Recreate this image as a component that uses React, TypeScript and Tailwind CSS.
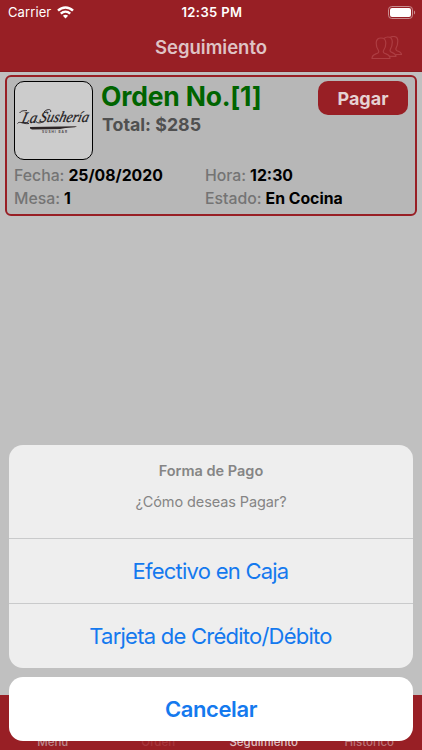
import clsx from "clsx"

const details = [
  { label: "Fecha:", value: "25/08/2020" },
  { label: "Hora:", value: "12:30" },
  { label: "Mesa:", value: "1" },
  { label: "Estado:", value: "En Cocina" },
]

const tabs = [
  { label: "Menú", color: "text-[#bc8a8d]" },
  { label: "Orden", color: "text-[#a8383e]" },
  { label: "Seguimiento", color: "text-[#dfc3c5]" },
  { label: "Histórico", color: "text-[#bc7478]" },
]

const options = ["Efectivo en Caja", "Tarjeta de Crédito/Débito"]

function WifiIcon() {
  return (
    <svg width="17" height="13" viewBox="0 0 17 13" fill="none" stroke="white" strokeWidth="2.4">
      <path d="M1 4.6C5.2 .4 11.8 .4 16 4.6" />
      <path d="M3.8 7.6C6.5 5.1 10.5 5.1 13.2 7.6" />
      <path d="M8.5 12.4L5.9 9.8C7.4 8.4 9.6 8.4 11.1 9.8Z" fill="white" stroke="none" />
    </svg>
  )
}

function BatteryIcon() {
  return (
    <svg width="28" height="13" viewBox="0 0 28 13" fill="none">
      <rect x=".5" y=".5" width="24" height="12" rx="3.3" stroke="#c98d90" />
      <rect x="2" y="2" width="21" height="9" rx="2" fill="white" />
      <path d="M26 4.5C27.5 5.2 27.5 7.8 26 8.5Z" fill="#c98d90" />
    </svg>
  )
}

function PeopleIcon() {
  return (
    <svg width="32" height="24" viewBox="0 0 32 24" fill="none" stroke="#ad3d42" strokeWidth="1.2" strokeLinejoin="round">
      <path d="M1 22.5C1 18.5 3.5 18.5 6.5 17.2C8 16.5 8 15.2 7.2 14C5.8 12 5.2 10 5.2 7C5.2 3.7 7 2 10 2S14.8 3.7 14.8 7C14.8 10 14.2 12 12.8 14C12 15.2 12 16.5 13.5 17.2C16.5 18.5 19 18.5 19 22.5Z" />
      <path d="M13 2.5C14 1.5 15.2 1 16.8 1C19.8 1 21.3 2.8 21.3 6C21.3 9 20.7 11 19.5 13C18.8 14.3 18.9 15.5 20.3 16.1C23 17.3 25 17.7 25 20.3H19" />
      <path d="M19.3 1.5C20.2 .8 21.2 .5 22.5 .5C25.5 .5 26.8 2.3 26.8 5C26.8 8 26.2 10 25.2 11.7C24.6 13 24.7 14 26 14.7C28.5 15.8 30.5 16 30.5 18.5H25" />
    </svg>
  )
}

function Logo() {
  return (
    <div className="h-[79px] w-[79px] rounded-[10px] border border-black bg-[#cccccc]">
      <svg className="overflow-visible" width="77" height="77" viewBox="0 0 77 77">
        <g fontFamily="'Liberation Serif', cursive" fontStyle="italic" fill="#211b1d" stroke="#211b1d" strokeWidth=".25">
          <text transform="translate(6 41) skewX(-14)" fontSize="16" textLength="15" lengthAdjust="spacingAndGlyphs">
            La
          </text>
          <text transform="translate(24 40) skewX(-14)" fontSize="15.5" textLength="49" lengthAdjust="spacingAndGlyphs">
            Sushería
          </text>
        </g>
        <path d="M4.5 31C7 28 9 29 12 28.5M2.5 41.5C4.5 38.5 8 42.5 14 41.5M20.5 38.5C21.5 42 26 41 29 39.5M29 30C32 26.5 37 27 35.5 30" fill="none" stroke="#211b1d" strokeWidth=".9" />
        <path d="M15 45L62 44.2L60 45.3L45 46.5L50 47L17 47.6L15 46.5Z" fill="#2c2526" />
        <text x="27" y="51.3" fontFamily="Inter, sans-serif" fontSize="3.2" fontWeight="700" textLength="25" fill="#4a4546">
          SUSHI BAR
        </text>
      </svg>
    </div>
  )
}

export default function App() {
  return (
    <div className="relative flex h-[750px] w-[422px] flex-col overflow-hidden bg-[#c0c0c0] font-['Inter',sans-serif]">
      <header className="h-[72px] shrink-0 border-b border-[#8a1c21] bg-[#981f25]">
        <div className="grid h-6 grid-cols-3 items-center pr-[6px] pl-2 text-white">
          <div className="flex items-center gap-[6px] text-[13px] leading-4 tracking-[0.1px]">
            Carrier
            <WifiIcon />
          </div>
          <span className="pt-px text-center text-[13px] font-semibold tracking-[0.4px] whitespace-nowrap">12:35 PM</span>
          <div className="flex justify-end">
            <BatteryIcon />
          </div>
        </div>
        <div className="grid h-12 grid-cols-[1fr_auto_1fr] items-center px-[19px]">
          <h1 className="col-start-2 text-[18.5px] font-semibold text-[#dfc3c5]">Seguimiento</h1>
          <div className="flex justify-end">
            <PeopleIcon />
          </div>
        </div>
      </header>

      <main className="flex-1 px-[5px] pt-[3px]">
        <section className="h-[141px] rounded-md border-2 border-[#981f25] bg-[#b7b7b7] px-[7px] pt-1">
          <div className="flex">
            <Logo />
            <div className="ml-2 flex-1">
              <h2 className="text-[26.5px] leading-[30px] font-bold tracking-[-0.2px] whitespace-nowrap text-[#006400]">Orden No.[1]</h2>
              <p className="pl-px text-[17.8px] leading-7 font-bold text-[#505050]">Total: $285</p>
            </div>
            <button className="h-[34px] w-[90px] rounded-[10px] bg-[#981f25] text-[18px] font-bold text-[#e5d1d2]">Pagar</button>
          </div>
          <dl className="mt-1 grid grid-cols-[191px_1fr] text-[15.8px] leading-[23px]">
            {details.map((detail) => (
              <div key={detail.label} className="flex gap-1 whitespace-nowrap">
                <dt className="font-medium text-[#747474]">{detail.label}</dt>
                <dd className="font-bold text-black">{detail.value}</dd>
              </div>
            ))}
          </dl>
        </section>
      </main>

      <nav className="grid h-[55px] shrink-0 grid-cols-4 items-end bg-[#981f25]">
        {tabs.map((tab) => (
          <span key={tab.label} className={clsx("text-center text-[11.5px] leading-4 font-medium", tab.color)}>
            {tab.label}
          </span>
        ))}
      </nav>

      {/* Action sheet */}
      <div className="absolute inset-x-[9px] bottom-[9px] flex flex-col gap-[9px] text-center">
        <div className="overflow-hidden rounded-[14px] bg-[#eeeeee]">
          <div className="h-[93px] pt-[17px] text-[14.5px] leading-[18px] text-[#858585]">
            <p className="font-semibold">Forma de Pago</p>
            <p className="mt-[13px] tracking-[-0.1px]">¿Cómo deseas Pagar?</p>
          </div>
          {options.map((option) => (
            <button key={option} className="block h-[65px] w-full border-t border-[#c9cacb] pr-px text-[22px] tracking-[-0.76px] text-[#1479ee]">
              {option}
            </button>
          ))}
        </div>
        <button className="h-16 rounded-[14px] bg-white text-[22px] font-semibold tracking-[-0.4px] text-[#1479ee]">Cancelar</button>
      </div>
    </div>
  )
}
